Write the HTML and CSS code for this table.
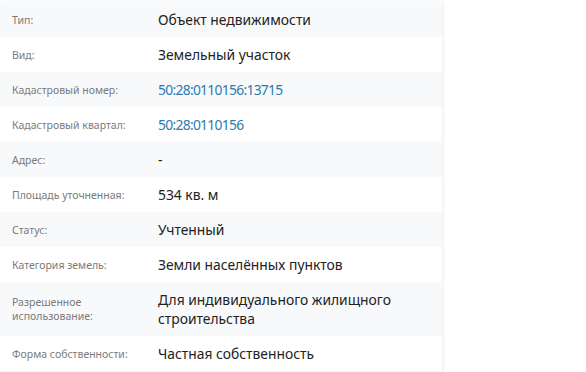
FILE: index.html
```html
<!DOCTYPE html>
<html lang="ru">
<head>
<meta charset="utf-8">
<link rel="stylesheet" href="styles.css">
</head>
<body>
<div class="card">
  <div class="row alt"><div class="label">Тип:</div><div class="value">Объект недвижимости</div></div>
  <div class="row"><div class="label">Вид:</div><div class="value">Земельный участок</div></div>
  <div class="row alt"><div class="label">Кадастровый номер:</div><div class="value"><a class="link" href="#">50:28:0110156:13715</a></div></div>
  <div class="row"><div class="label">Кадастровый квартал:</div><div class="value"><a class="link" href="#">50:28:0110156</a></div></div>
  <div class="row alt"><div class="label">Адрес:</div><div class="value">-</div></div>
  <div class="row"><div class="label">Площадь уточненная:</div><div class="value">534 кв. м</div></div>
  <div class="row alt"><div class="label">Статус:</div><div class="value">Учтенный</div></div>
  <div class="row"><div class="label">Категория земель:</div><div class="value">Земли населённых пунктов</div></div>
  <div class="row alt"><div class="label">Разрешенное использование:</div><div class="value">Для индивидуального жилищного строительства</div></div>
  <div class="row"><div class="label">Форма собственности:</div><div class="value">Частная собственность</div></div>
  <div class="strip"></div>
</div>
</body>
</html>
```
FILE: styles.css
```css
html, body {
  margin: 0;
  padding: 0;
  background: #fff;
  overflow: hidden;
}
body {
  padding-top: 2px;
  font-family: "Noto Sans", "Open Sans", sans-serif;
}
.card {
  width: 442px;
  box-shadow: 1px 0 3px rgba(0, 0, 0, 0.08);
  background: #fff;
}
.row {
  display: grid;
  grid-template-columns: 146px 1fr;
  align-items: center;
  padding: 8px 12px;
  min-height: 19px;
}
.row.alt {
  background: #f8f9fb;
}
.strip {
  height: 2px;
  background: #f8f9fb;
}
.label {
  font-size: 10.5px;
  color: #7a7a7a;
  line-height: 14px;
}
.value {
  font-size: 13.85px;
  color: #222;
  line-height: 19px;
}
.link {
  color: #2b7bb0;
  text-decoration: none;
  letter-spacing: -0.7px;
}
```
